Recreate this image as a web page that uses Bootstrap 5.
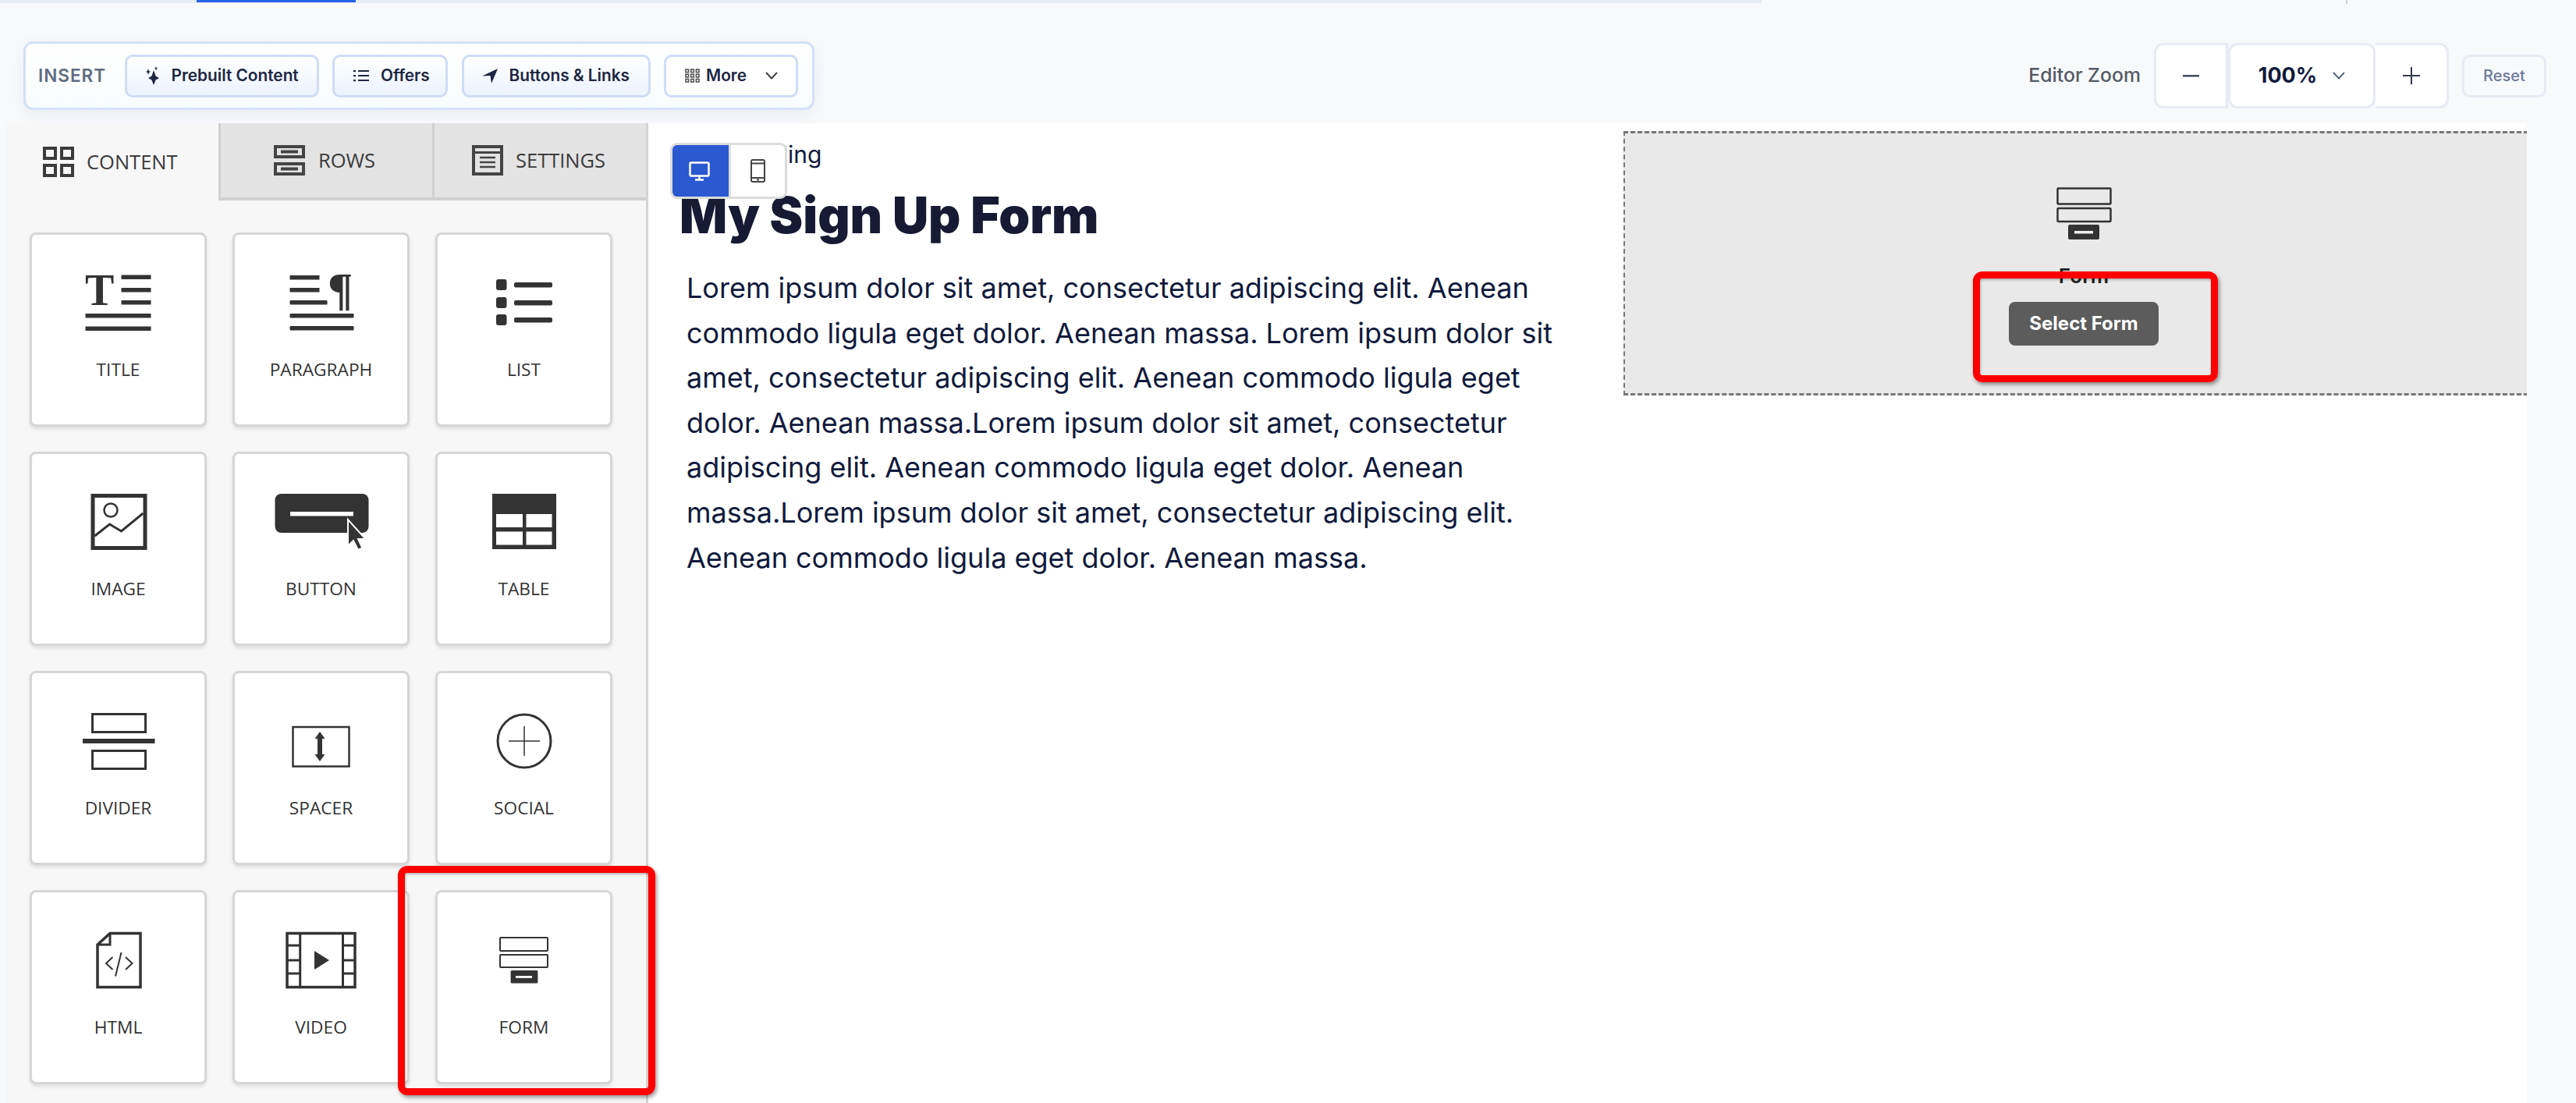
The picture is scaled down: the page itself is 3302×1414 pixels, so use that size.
<!DOCTYPE html>
<html lang="en">
<head>
<meta charset="UTF-8">
<title>My Sign Up Form - Editor</title>
<link href="https://cdn.jsdelivr.net/npm/bootstrap@5.3.0/dist/css/bootstrap.min.css" rel="stylesheet">
<style>
  html, body { height: 1414px; overflow: hidden; }
  body { background: #f8f9fb; font-family: Inter, "Liberation Sans", sans-serif; color: #111a3c; }

  /* top strip */
  .top-strip { height: 4px; width: 2258px; background: #e6eaf1; }
  .top-strip span { display: block; width: 204px; height: 3px; margin-left: 252px; background: #2563eb; }
  .top-tick { position: absolute; left: 3007px; top: 0; width: 2px; height: 5px; background: #c8d0dc; }

  /* toolbar row */
  .tool-row { height: 154px; padding: 49px 38px 17px 30px; }
  .insert-bar { height: 88px; width: 1014px; padding: 0 0 0 16px; gap: 17.500px; background: linear-gradient(#fff, #f8fbff); border: 3px solid #d3e0f5; border-radius: 12px; box-shadow: 0 6px 18px rgba(120, 140, 180, .1); }
  .insert-label { width: 93px; flex-shrink: 0; font-size: 22.500px; font-weight: 600; letter-spacing: 1px; color: #5f6b80; }
  .tool-btn { display: flex; align-items: center; flex-shrink: 0; height: 55px; padding: 0; font-size: 20.800px; font-weight: 600; color: #1d2742; background: linear-gradient(#fff, #ebf3ff); border: 3px solid #cfdcf5; border-radius: 10px; }
  .tool-btn.plain { background: #fff; }
  .zoom-label { margin-right: 17px; font-size: 24.800px; font-weight: 500; color: #545a66; }
  .zoom-box { display: flex; align-items: center; justify-content: center; height: 84px; background: #fff; border: 3px solid #e8ebf3; }
  .zoom-minus { width: 95px; border-radius: 12px 0 0 12px; }
  .zoom-value { width: 189px; gap: 20px; border-radius: 12px; font-size: 27px; font-weight: 700; color: #111a3c; }
  .zoom-plus { width: 94px; border-left: 0; border-radius: 0 12px 12px 0; }
  .zoom-reset { width: 108px; height: 55px; margin-left: 17px; padding: 0; font-size: 20px; font-weight: 500; color: #6b7a99; background: #f8f9fb; border: 3px solid #e8ebf3; border-radius: 10px; }

  /* editor */
  .editor { width: 3232px; height: 1256px; margin-left: 7px; }
  .side-panel { width: 824px; flex-shrink: 0; background: #f7f7f7; border-right: 3px solid #d4d4d4; font-family: "Open Sans", "Liberation Sans", sans-serif; color: #333; }
  .panel-tabs { height: 99px; }
  .panel-tab { display: flex; align-items: center; width: 274px; height: 99px; font-size: 25.500px; color: #3b3b3b; background: #e3e3e3; border-left: 3px solid #d0d0d0; border-bottom: 4px solid #d0d0d0; }
  .panel-tab.on { width: 273px; background: transparent; border: 0; padding-left: 48px; gap: 16px; }
  .panel-tab.rows { padding-left: 68px; gap: 17px; }
  .panel-tab.sets { padding-left: 48px; gap: 16px; }
  .widget-grid { display: grid; grid-template-columns: repeat(3, 227px); column-gap: 33px; row-gap: 32px; padding: 41px 0 0 31px; }
  .widget { height: 249px; align-items: center; border: 3px solid #d6d6d6; border-radius: 8px; box-shadow: 0 3px 4px rgba(0, 0, 0, .1); }
  .widget svg { width: 130px; height: 90px; margin-top: 44px; flex-shrink: 0; }
  .widget-name { margin-top: 24px; font-size: 22.700px; line-height: 30px; color: #333; }

  /* canvas */
  .canvas { width: 2408px; background: #fff; overflow: hidden; }
  .copy-col { width: 1250px; padding: 0 0 0 40px; flex-shrink: 0; }
  .sub-heading { margin: 22px 0 0; font-size: 30px; line-height: 36px; color: #111a3c; }
  .form-title { margin: 20px 0 0; font-size: 64px; line-height: 80px; font-weight: 900; color: #161a33; }
  .copy-text { width: 1130px; margin: 25px 0 0 9px; font-size: 36px; line-height: 57.600px; color: #111a3c; }
  .device-toggle { position: absolute; left: 28px; top: 25px; width: 150px; height: 72px; background: #fff; border: 3px solid #dcdcdc; border-radius: 9px; overflow: hidden; }
  .device-toggle span { display: flex; align-items: center; justify-content: center; height: 100%; }
  .device-on { width: 75px; margin: -3px 0 -3px -3px; height: 72px !important; background: #2a59d1; }
  .device-off { flex: 1; border-left: 3px solid #dcdcdc; }
  .form-slot { width: 1178px; height: 339px; margin-top: 10px; flex-shrink: 0; align-items: center; background: #e9e9e9; border-top: 3px dashed #777; border-bottom: 3px dashed #777; border-left: 2px dashed #777; }
  .form-slot svg { width: 71px; height: 67px; margin-top: 69px; flex-shrink: 0; }
  .form-word { margin-top: 32px; font-size: 26px; line-height: 30px; font-weight: 600; color: #222; }
  .select-btn { width: 192px; height: 56px; margin-top: 18px; padding: 0; font-size: 24px; font-weight: 700; color: #fff; background: #5c5c5c; border: 0; border-radius: 8px; }

  /* annotation boxes */
  .red-box { position: absolute; border: 9px solid #fe0000; border-radius: 12px; box-shadow: 2px 3px 5px rgba(0, 0, 0, .4), inset 1px 2px 3px rgba(0, 0, 0, .25); }
  .red-side { left: 510px; top: 1110px; width: 330px; height: 294px; }
  .red-form { left: 2529px; top: 348px; width: 314px; height: 142px; }
</style>
</head>
<body class="position-relative">

<div class="top-strip"><span></span></div>
<div class="top-tick"></div>

<div class="tool-row d-flex justify-content-between">
  <div class="insert-bar d-flex align-items-center">
    <div class="insert-label">INSERT</div>
    <button class="btn tool-btn" style="width:249px;padding-left:23px;gap:14px">
      <svg width="20" height="24" viewBox="0 0 20 24" fill="#1d2742"><path d="M11 5 13.600 12.500 18 15 13.600 17.500 11 24 8.400 17.500 4 15 8.400 12.500Z"/><path d="M4 3 5 6 7 7 5 8 4 11 3 8 1 7 3 6Z"/><path d="M14 0 14.700 2 16 2.800 14.700 3.600 14 5.500 13.300 3.600 12 2.800 13.300 2Z"/></svg>
      Prebuilt Content
    </button>
    <button class="btn tool-btn" style="width:148px;padding-left:24px;gap:15px">
      <svg width="20" height="15" viewBox="0 0 20 15" fill="#1d2742"><rect x="0" y="0" width="3" height="2.200"/><rect x="6" y="0" width="14" height="2"/><rect x="0" y="6" width="3" height="2.200"/><rect x="6" y="6" width="14" height="2"/><rect x="0" y="12" width="3" height="2.200"/><rect x="6" y="12" width="14" height="2"/></svg>
      Offers
    </button>
    <button class="btn tool-btn" style="width:242px;padding-left:23px;gap:15px">
      <svg width="20" height="19" viewBox="0 0 20 19" fill="#1d2742"><path d="M20 0 12 19 10.500 9 0 9.500Z"/></svg>
      Buttons &amp; Links
    </button>
    <button class="btn tool-btn plain" style="width:172px;padding-left:24px;gap:8px">
      <svg width="19" height="18" viewBox="0 0 19 18" fill="none" stroke="#555" stroke-width="1.600"><rect x="1" y="1" width="3.600" height="3.600"/><rect x="7.700" y="1" width="3.600" height="3.600"/><rect x="14.400" y="1" width="3.600" height="3.600"/><rect x="1" y="7.200" width="3.600" height="3.600"/><rect x="7.700" y="7.200" width="3.600" height="3.600"/><rect x="14.400" y="7.200" width="3.600" height="3.600"/><rect x="1" y="13.400" width="3.600" height="3.600"/><rect x="7.700" y="13.400" width="3.600" height="3.600"/><rect x="14.400" y="13.400" width="3.600" height="3.600"/></svg>
      More
      <svg class="ms-3" width="16" height="10" viewBox="0 0 16 10" fill="none" stroke="#444" stroke-width="2"><path d="M1 1 8 8.500 15 1"/></svg>
    </button>
  </div>
  <div class="d-flex align-items-center">
    <div class="zoom-label">Editor Zoom</div>
    <div class="zoom-box zoom-minus"><svg width="21" height="3"><rect width="21" height="2.500" fill="#444b5c"/></svg></div>
    <div class="zoom-box zoom-value">100% <svg width="16" height="10" viewBox="0 0 16 10" fill="none" stroke="#5c6a80" stroke-width="2"><path d="M1 1 8 8.500 15 1"/></svg></div>
    <div class="zoom-box zoom-plus"><svg width="22" height="22"><path d="M11 0V22M0 11H22" stroke="#333a4a" stroke-width="2"/></svg></div>
    <button class="btn zoom-reset">Reset</button>
  </div>
</div>

<div class="editor d-flex">
  <div class="side-panel">
    <div class="panel-tabs d-flex">
      <div class="panel-tab on">
        <svg width="40" height="39" viewBox="0 0 40 39" fill="none" stroke="#3c3c3c" stroke-width="4"><rect x="2" y="2" width="14" height="13"/><rect x="24" y="2" width="14" height="13"/><rect x="2" y="24" width="14" height="13"/><rect x="24" y="24" width="14" height="13"/></svg>
        CONTENT
      </div>
      <div class="panel-tab rows">
        <svg width="40" height="39" viewBox="0 0 40 39" fill="none" stroke="#444"><rect x="2" y="2" width="36" height="13" stroke-width="4"/><rect x="2" y="24" width="36" height="13" stroke-width="4"/><path d="M9 8.500H31M9 30.500H31" stroke-width="4"/></svg>
        ROWS
      </div>
      <div class="panel-tab sets">
        <svg width="40" height="39" viewBox="0 0 40 39" fill="none" stroke="#444"><rect x="2" y="2" width="36" height="35" stroke-width="4"/><path d="M2 9.500H38" stroke-width="3"/><path d="M10 16H30M10 22H30M10 28H30" stroke-width="2.500"/></svg>
        SETTINGS
      </div>
    </div>

    <div class="widget-grid">
      <div class="card widget">
        <svg viewBox="-5 0 130 90" fill="#333">
          <text x="17" y="46" font-family="Liberation Serif" font-weight="700" font-size="56">T</text>
          <rect x="63.500" y="7.500" width="38" height="5.500"/><rect x="63.500" y="24" width="38" height="5.500"/><rect x="63.500" y="40" width="38" height="5.500"/>
          <rect x="17.500" y="57" width="84" height="5.500"/><rect x="17.500" y="73.500" width="84" height="5.500"/>
        </svg>
        <div class="widget-name">TITLE</div>
      </div>
      <div class="card widget">
        <svg viewBox="-5 0 130 90" fill="#333">
          <rect x="19.500" y="8" width="38" height="5.500"/><rect x="19.500" y="24" width="38" height="5.500"/><rect x="19.500" y="40" width="48" height="5.500" rx="1"/>
          <text x="68" y="46" font-family="Liberation Serif" font-weight="700" font-size="60">¶</text>
          <rect x="19.500" y="57" width="82" height="5.500" rx="1"/><rect x="19.500" y="73" width="82" height="5.500" rx="1"/>
        </svg>
        <div class="widget-name">PARAGRAPH</div>
      </div>
      <div class="card widget">
        <svg viewBox="-5 0 130 90" fill="#333">
          <rect x="24" y="13" width="13.500" height="14" rx="3"/><rect x="24" y="36" width="13.500" height="14" rx="3"/><rect x="24" y="58" width="13.500" height="14" rx="3"/>
          <rect x="47" y="17" width="49" height="6.500" rx="2"/><rect x="47" y="40" width="49" height="6.500" rx="2"/><rect x="47" y="62" width="49" height="6.500" rx="2"/>
        </svg>
        <div class="widget-name">LIST</div>
      </div>

      <div class="card widget">
        <svg viewBox="-5 0 130 90" fill="none" stroke="#333">
          <rect x="27" y="9.500" width="67" height="67" stroke-width="5"/>
          <circle cx="50" cy="28" r="8.500" stroke-width="2.500"/>
          <path d="M29.500 61 48.500 46 63.500 55 91.500 32" stroke-width="3"/>
        </svg>
        <div class="widget-name">IMAGE</div>
      </div>
      <div class="card widget">
        <svg viewBox="-5 0 130 90" fill="#333">
          <rect x="0.500" y="7" width="120" height="50" rx="8"/>
          <rect x="20" y="30" width="81" height="5.500" fill="#fff"/>
          <path d="M94 40V74L101 67 107 79 112.500 76.500 107 65 116.500 65Z" stroke="#fff" stroke-width="2"/>
        </svg>
        <div class="widget-name">BUTTON</div>
      </div>
      <div class="card widget">
        <svg viewBox="-5 0 130 90">
          <rect x="19" y="7" width="82" height="71" fill="#333"/>
          <g fill="#fff"><rect x="24" y="33" width="34" height="17"/><rect x="62.500" y="33" width="33" height="17"/><rect x="24" y="55.500" width="34" height="17"/><rect x="62.500" y="55.500" width="33" height="17"/></g>
        </svg>
        <div class="widget-name">TABLE</div>
      </div>

      <div class="card widget">
        <svg viewBox="-5 0 130 90" fill="none" stroke="#333" stroke-width="3">
          <rect x="26.500" y="8.500" width="68" height="23"/><rect x="26.500" y="55.500" width="68" height="23"/>
          <rect x="14" y="40" width="92.500" height="6" fill="#333" stroke="none"/>
        </svg>
        <div class="widget-name">DIVIDER</div>
      </div>
      <div class="card widget">
        <svg viewBox="-5 0 130 90" fill="#333">
          <rect x="23.500" y="25" width="72" height="50.500" fill="none" stroke="#333" stroke-width="2.500"/>
          <path d="M58 31 64.500 40H61V60H64.500L58 69 51.500 60H55V40H51.500Z"/>
        </svg>
        <div class="widget-name">SPACER</div>
      </div>
      <div class="card widget">
        <svg viewBox="-5 0 130 90" fill="none" stroke="#333">
          <circle cx="60" cy="43" r="34" stroke-width="3"/>
          <path d="M60 24V62M40 43H80" stroke-width="1.500"/>
        </svg>
        <div class="widget-name">SOCIAL</div>
      </div>

      <div class="card widget">
        <svg viewBox="-5 0 130 90" fill="none" stroke="#333">
          <path d="M49 8.500H88V77.500H33V23Z" stroke-width="3.500"/>
          <path d="M49 8.500V23H33" stroke-width="3"/>
          <path d="M52.500 39 44 47 52.500 55M69 39 77.500 47 69 55M63.500 33 56 63.500" stroke-width="2"/>
        </svg>
        <div class="widget-name">HTML</div>
      </div>
      <div class="card widget">
        <svg viewBox="-5 0 130 90" fill="none" stroke="#333" stroke-width="3.500">
          <rect x="16" y="8.500" width="87" height="69"/>
          <path d="M32.700 8.500V77.500M87.500 8.500V77.500M16 24H32.700M16 43H32.700M16 60H32.700M87.500 24H103M87.500 43H103M87.500 60H103" stroke-width="3"/>
          <path d="M51 31 70 43 51 55Z" fill="#333" stroke="none"/>
        </svg>
        <div class="widget-name">VIDEO</div>
      </div>
      <div class="card widget">
        <svg viewBox="-5 0 130 90" fill="none" stroke="#333" stroke-width="2">
          <rect x="29" y="14" width="61" height="17" rx="1"/><rect x="29" y="36" width="61" height="16" rx="1"/>
          <rect x="42.600" y="56" width="34.800" height="16.500" rx="1.500" fill="#333" stroke="none"/>
          <rect x="49" y="63" width="21" height="2.800" fill="#fff" stroke="none"/>
        </svg>
        <div class="widget-name">FORM</div>
      </div>
    </div>
  </div>

  <div class="canvas d-flex position-relative">
    <div class="device-toggle d-flex">
      <span class="device-on">
        <svg width="27" height="25" viewBox="0 0 27 25" fill="none" stroke="#fff" stroke-width="2.500"><rect x="1.500" y="1.500" width="24" height="17" rx="1.500"/><path d="M13.500 18.500V23M8 23.500H19"/></svg>
      </span>
      <span class="device-off">
        <svg width="19" height="30" viewBox="0 0 19 30" fill="none" stroke="#444" stroke-width="2"><rect x="1" y="1" width="17" height="28" rx="2"/><path d="M1 5.500H18M1 24H18" /><rect x="8" y="25.500" width="3" height="2" fill="#444" stroke="none"/></svg>
      </span>
    </div>

    <div class="copy-col">
      <p class="sub-heading">Sub Heading</p>
      <h1 class="form-title">My Sign Up Form</h1>
      <p class="copy-text">Lorem ipsum dolor sit amet, consectetur adipiscing elit. Aenean commodo ligula eget dolor. Aenean massa. Lorem ipsum dolor sit amet, consectetur adipiscing elit. Aenean commodo ligula eget dolor. Aenean massa.Lorem ipsum dolor sit amet, consectetur adipiscing elit. Aenean commodo ligula eget dolor. Aenean massa.Lorem ipsum dolor sit amet, consectetur adipiscing elit. Aenean commodo ligula eget dolor. Aenean massa.</p>
    </div>

    <div class="form-slot d-flex flex-column">
      <svg viewBox="0 0 71 67" fill="none" stroke="#333" stroke-width="2.500">
        <rect x="1.500" y="1.500" width="68" height="20" rx="1"/><rect x="1.500" y="27" width="68" height="17" rx="1"/>
        <rect x="15" y="48" width="40" height="19" rx="2" fill="#333" stroke="none"/>
        <rect x="23" y="56" width="24" height="3.500" fill="#eee" stroke="none"/>
      </svg>
      <div class="form-word">Form</div>
      <button class="btn select-btn">Select Form</button>
    </div>
  </div>
</div>

<div class="red-box red-side"></div>
<div class="red-box red-form"></div>

<script src="https://cdn.jsdelivr.net/npm/bootstrap@5.3.0/dist/js/bootstrap.bundle.min.js"></script>
</body>
</html>
